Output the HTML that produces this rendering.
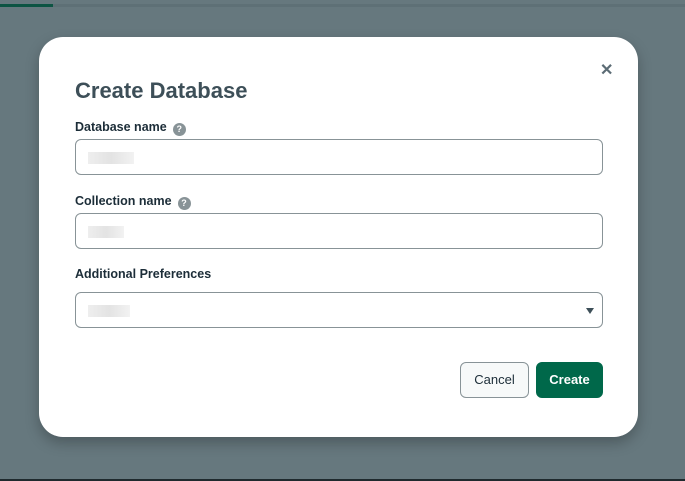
<!DOCTYPE html>
<html><head><style>
*{box-sizing:border-box;margin:0;padding:0}
body{width:685px;height:481px;background:#66787e;position:relative;overflow:hidden;font-family:"Liberation Sans",sans-serif;}
.topline{position:absolute;left:0;top:4px;width:685px;height:3px;background:#5e7076}
.topgreen{position:absolute;left:0;top:4px;width:53px;height:3px;background:#0d5443}
.bottom{position:absolute;left:0;top:479px;width:685px;height:2px;background:#1f2a2e}
.modal{position:absolute;left:39px;top:37px;width:599px;height:400px;background:#fff;border-radius:24px;box-shadow:0 6px 14px rgba(0,0,0,.25)}
h1{position:absolute;left:36px;top:41px;font-size:22px;font-weight:bold;color:#3d4f58}
.x{position:absolute;left:561px;top:23px;font-size:16px;font-weight:bold;color:#5c6c75}
.lab{position:absolute;left:36px;font-size:12.5px;font-weight:bold;color:#1c2d38}
.q{display:inline-block;width:13px;height:13px;border-radius:50%;background:#889397;color:#fff;font-size:9px;text-align:center;line-height:13px;margin-left:6px;vertical-align:-1px}
.in{position:absolute;left:36px;width:528px;height:36px;border:1px solid #889397;border-radius:6px}
.blob{position:absolute;left:12px;top:12px;width:46px;height:12px;background:linear-gradient(90deg,#eee,#e3e3e3,#f2f2f2)}
.arr{position:absolute;right:8px;top:15px;width:0;height:0;border-left:4px solid transparent;border-right:4px solid transparent;border-top:6px solid #3d4f58}
.btn{position:absolute;top:325px;height:36px;border-radius:6px;font-size:13px;text-align:center;line-height:34px}
</style></head><body>
<div class="topline"></div><div class="topgreen"></div>
<div class="modal">
<h1>Create Database</h1>
<div class="x">✕</div>
<div class="lab" style="top:83px">Database name<span class="q">?</span></div>
<div class="in" style="top:102px"><div class="blob"></div></div>
<div class="lab" style="top:157px">Collection name<span class="q">?</span></div>
<div class="in" style="top:176px"><div class="blob" style="left:12px;width:36px"></div></div>
<div class="lab" style="top:230px">Additional Preferences</div>
<div class="in" style="top:255px"><div class="blob" style="width:42px"></div><div class="arr"></div></div>
<div class="btn" style="left:421px;width:69px;border:1px solid #889397;background:#f7f9f9;color:#1c2d38">Cancel</div>
<div class="btn" style="left:497px;width:67px;background:#00684a;color:#fff;font-weight:bold;border:1px solid #00684a">Create</div>
</div>
<div class="bottom"></div>
</body></html>
